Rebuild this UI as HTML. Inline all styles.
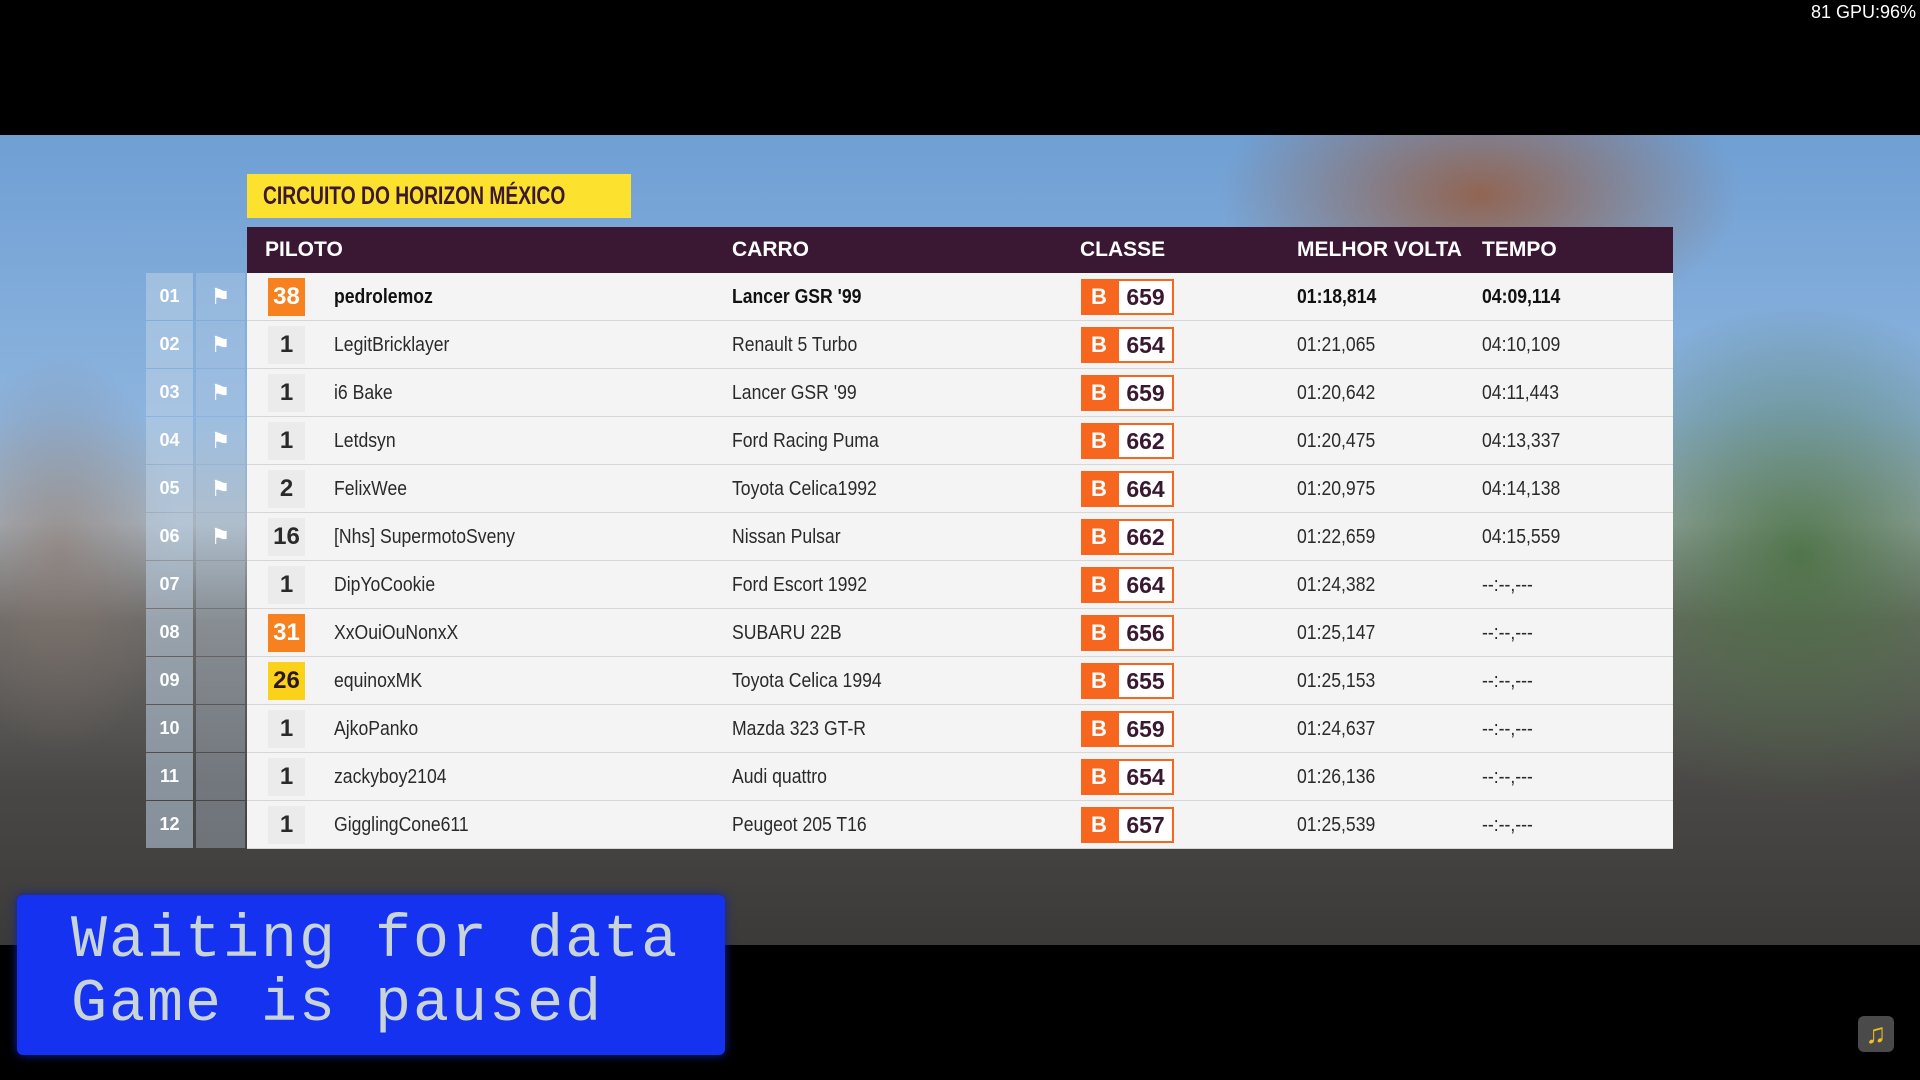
<!DOCTYPE html>
<html><head><meta charset="utf-8"><style>
*{margin:0;padding:0;box-sizing:border-box}
body{width:1920px;height:1080px;background:#000;position:relative;overflow:hidden;font-family:"Liberation Sans",sans-serif}
.scene{position:absolute;left:0;top:135px;width:1920px;height:810px;
background:
radial-gradient(ellipse 260px 140px at 1480px 60px,rgba(150,90,60,.85),transparent),
radial-gradient(ellipse 250px 250px at 1800px 420px,rgba(70,110,60,.85),transparent),
radial-gradient(ellipse 120px 200px at 60px 420px,rgba(140,120,110,.6),transparent),
linear-gradient(180deg,#6f9fd4 0%,#8db4de 35%,#a8b4bf 48%,#6b6a68 60%,#4a4846 80%,#3b3a39 100%);}
.gpu{position:absolute;right:4px;top:2px;color:#fff;font:18px "Liberation Sans",sans-serif}
.title{position:absolute;left:247px;top:174px;width:384px;height:44px;background:#fde12f;color:#3a1830;font-weight:bold;font-size:25px;line-height:44px;padding-left:16px;white-space:nowrap}
.title span{display:inline-block;transform:scaleX(0.77);transform-origin:left}
.hdr{position:absolute;left:247px;top:227px;width:1426px;height:46px;background:#3a1732;color:#fff;font-weight:bold;font-size:21px}
.hdr span,.row span{position:absolute;top:0;white-space:nowrap}
.hdr span{line-height:46px}
.t{transform:scaleX(0.88);transform-origin:left}
.rows{position:absolute;left:247px;top:273px;width:1426px;height:576px;background:#f4f4f4}
.row{position:absolute;left:0;width:1426px;height:48px;font-size:20px;color:#2a2a2a;line-height:48px;border-bottom:1px solid #d6d6d6}
.rk{left:21px;width:37px;height:38px;top:5px!important;line-height:38px;text-align:center;font-weight:bold;font-size:24px;background:#ebebeb}
.or{background:#f7811f;color:#fff}
.ye{background:#fbd21a;color:#2a1a20}
.b{left:834px;top:6px!important;width:36px;height:36px;background:#f7661f;color:#fff;text-align:center;line-height:36px;font-weight:bold;font-size:22px}
.n{left:870px;top:6px!important;width:57px;height:36px;border:2px solid #f7661f;background:#fff;text-align:center;line-height:32px;font-weight:bold;font-size:23px;color:#3a1732}
.pos{position:absolute;left:146px;width:47px;height:47px;background:rgba(190,210,230,.55);color:#fff;font-weight:bold;font-size:18px;text-align:center;line-height:47px}
.fl{position:absolute;left:196px;width:49px;height:47px;background:rgba(190,210,230,.35);color:#fff;text-align:center;line-height:47px;font-size:22px}
.lcd{position:absolute;left:17px;top:895px;width:708px;height:160px;background:#1432f0;border-radius:6px;box-shadow:0 0 10px #1020a0;color:#c8d4d8;font-family:"Liberation Mono","DejaVu Sans Mono",monospace;font-size:60px;line-height:64px;padding:14px 0 0 54px;letter-spacing:2px}
.mus{position:absolute;left:1858px;top:1016px;width:36px;height:36px;background:#4a4a4a;border-radius:6px;color:#f0c020;font-size:28px;text-align:center;line-height:36px}
</style></head><body>
<div class="gpu">81 GPU:96%</div>
<div class="scene"></div>
<div class="title"><span>CIRCUITO DO HORIZON MÉXICO</span></div>
<div class="hdr"><span style="left:18px">PILOTO</span><span style="left:485px">CARRO</span><span style="left:833px">CLASSE</span><span style="left:1050px">MELHOR VOLTA</span><span style="left:1235px">TEMPO</span></div>
<div id="side"></div>
<div class="rows" id="rows"></div>
<div class="lcd">Waiting for data<br>Game is paused</div>
<div class="mus">♫</div>
<script>
var d=[["38","or","pedrolemoz","Lancer GSR '99","659","01:18,814","04:09,114",1],
["1","","LegitBricklayer","Renault 5 Turbo","654","01:21,065","04:10,109"],
["1","","i6 Bake","Lancer GSR '99","659","01:20,642","04:11,443"],
["1","","Letdsyn","Ford Racing Puma","662","01:20,475","04:13,337"],
["2","","FelixWee","Toyota Celica1992","664","01:20,975","04:14,138"],
["16","","[Nhs] SupermotoSveny","Nissan Pulsar","662","01:22,659","04:15,559"],
["1","","DipYoCookie","Ford Escort 1992","664","01:24,382","--:--,---"],
["31","or","XxOuiOuNonxX","SUBARU 22B","656","01:25,147","--:--,---"],
["26","ye","equinoxMK","Toyota Celica 1994","655","01:25,153","--:--,---"],
["1","","AjkoPanko","Mazda 323 GT-R","659","01:24,637","--:--,---"],
["1","","zackyboy2104","Audi quattro","654","01:26,136","--:--,---"],
["1","","GigglingCone611","Peugeot 205 T16","657","01:25,539","--:--,---"]];
var h="",s="";
d.forEach(function(r,i){var w=r[7]?"font-weight:bold;color:#111;":"";
h+='<div class="row" style="top:'+(i*48)+'px;'+w+'"><span class="rk '+r[1]+'">'+r[0]+'</span><span class="t" style="left:87px">'+r[2]+'</span><span class="t" style="left:485px">'+r[3]+'</span><span class="b">B</span><span class="n">'+r[4]+'</span><span class="t" style="left:1050px">'+r[5]+'</span><span class="t" style="left:1235px">'+r[6]+'</span></div>';
var y=273+i*48;var p=(i+1<10?"0":"")+(i+1);
s+='<div class="pos" style="top:'+y+'px">'+p+'</div><div class="fl" style="top:'+y+'px">'+(i<6?"⚑":"")+'</div>';});
document.getElementById("rows").innerHTML=h;document.getElementById("side").innerHTML=s;
</script>
</body></html>
